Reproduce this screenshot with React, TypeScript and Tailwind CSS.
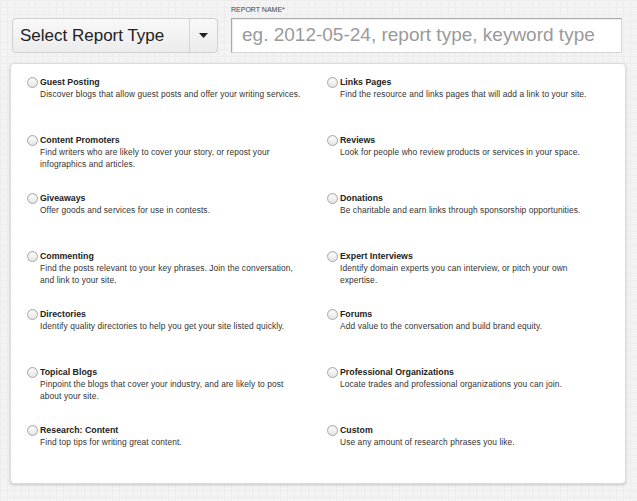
import React from "react";

interface ReportType {
  title: string;
  desc: string;
}

const LEFT: ReportType[] = [
  { title: "Guest Posting", desc: "Discover blogs that allow guest posts and offer your writing services." },
  { title: "Content Promoters", desc: "Find writers who are likely to cover your story, or repost your\ninfographics and articles." },
  { title: "Giveaways", desc: "Offer goods and services for use in contests." },
  { title: "Commenting", desc: "Find the posts relevant to your key phrases. Join the conversation,\nand link to your site." },
  { title: "Directories", desc: "Identify quality directories to help you get your site listed quickly." },
  { title: "Topical Blogs", desc: "Pinpoint the blogs that cover your industry, and are likely to post\nabout your site." },
  { title: "Research: Content", desc: "Find top tips for writing great content." },
];

const RIGHT: ReportType[] = [
  { title: "Links Pages", desc: "Find the resource and links pages that will add a link to your site." },
  { title: "Reviews", desc: "Look for people who review products or services in your space." },
  { title: "Donations", desc: "Be charitable and earn links through sponsorship opportunities." },
  { title: "Expert Interviews", desc: "Identify domain experts you can interview, or pitch your own\nexpertise." },
  { title: "Forums", desc: "Add value to the conversation and build brand equity." },
  { title: "Professional Organizations", desc: "Locate trades and professional organizations you can join." },
  { title: "Custom", desc: "Use any amount of research phrases you like." },
];

function Option({ item }: { item: ReportType }) {
  return (
    <label className="flex items-start h-[58px] cursor-pointer">
      <span className="mt-[1px] w-[11px] h-[11px] shrink-0 rounded-full border border-[#a9a9a9] bg-[linear-gradient(#ffffff,#e4e4e4)] shadow-[inset_0_1px_1px_rgba(0,0,0,0.08)]" />
      <span className="ml-[2px] w-[285px]">
        <span className="block text-[8.8px] leading-[12px] font-bold text-[#222]">{item.title}</span>
        <span className="block text-[8.4px] leading-[12px] text-[#333] whitespace-pre-line tracking-[0.1px]">{item.desc}</span>
      </span>
    </label>
  );
}

export default function App() {
  const rows = LEFT.map((l, i) => [l, RIGHT[i]] as const);
  return (
    <div
      className="w-[637px] h-[501px] overflow-hidden bg-[#f3f3f3] bg-[linear-gradient(#ededed_1px,transparent_1px),linear-gradient(90deg,#ededed_1px,transparent_1px)] bg-[size:7px_7px] font-['Liberation_Sans',Arial,sans-serif]"
    >
      <div className="flex items-end pl-[12px] pr-[15px] pt-[5px]">
        <div className="flex w-[206px] h-[35px] rounded-[4px] border border-[#cfcfcf] bg-[linear-gradient(#f8f8f8,#ececec)]">
          <div className="flex-1 flex items-center pl-[7px] text-[17px] text-[#222]">Select Report Type</div>
          <div className="w-[28px] flex items-center justify-center border-l border-[#d6d6d6]">
            <svg width="9" height="5" viewBox="0 0 9 5">
              <path d="M0 0h9L4.5 5z" fill="#222" />
            </svg>
          </div>
        </div>
        <div className="ml-[13px] flex-1 flex flex-col">
          <div className="text-[7px] leading-[9px] text-[#444] uppercase mb-[4px]">Report Name*</div>
          <div className="h-[35px] flex items-center bg-white border border-[#d4d4d4] border-t-[#a8a8a8] border-l-[#a8a8a8] shadow-[inset_1px_1px_1px_rgba(0,0,0,0.08)] pl-[10px] text-[19px] text-[#9a9a9a] whitespace-nowrap">
            eg. 2012-05-24, report type, keyword type
          </div>
        </div>
      </div>
      <div className="mt-[10px] ml-[10px] w-[616px] h-[421px] rounded-[4px] bg-white border border-[#dcdcdc] shadow-[0_1px_3px_rgba(0,0,0,0.18)] pt-[12px] pl-[16px]">
        {rows.map(([l, r]) => (
          <div key={l.title} className="grid grid-cols-[300px_300px]">
            <Option item={l} />
            <Option item={r} />
          </div>
        ))}
      </div>
    </div>
  );
}
